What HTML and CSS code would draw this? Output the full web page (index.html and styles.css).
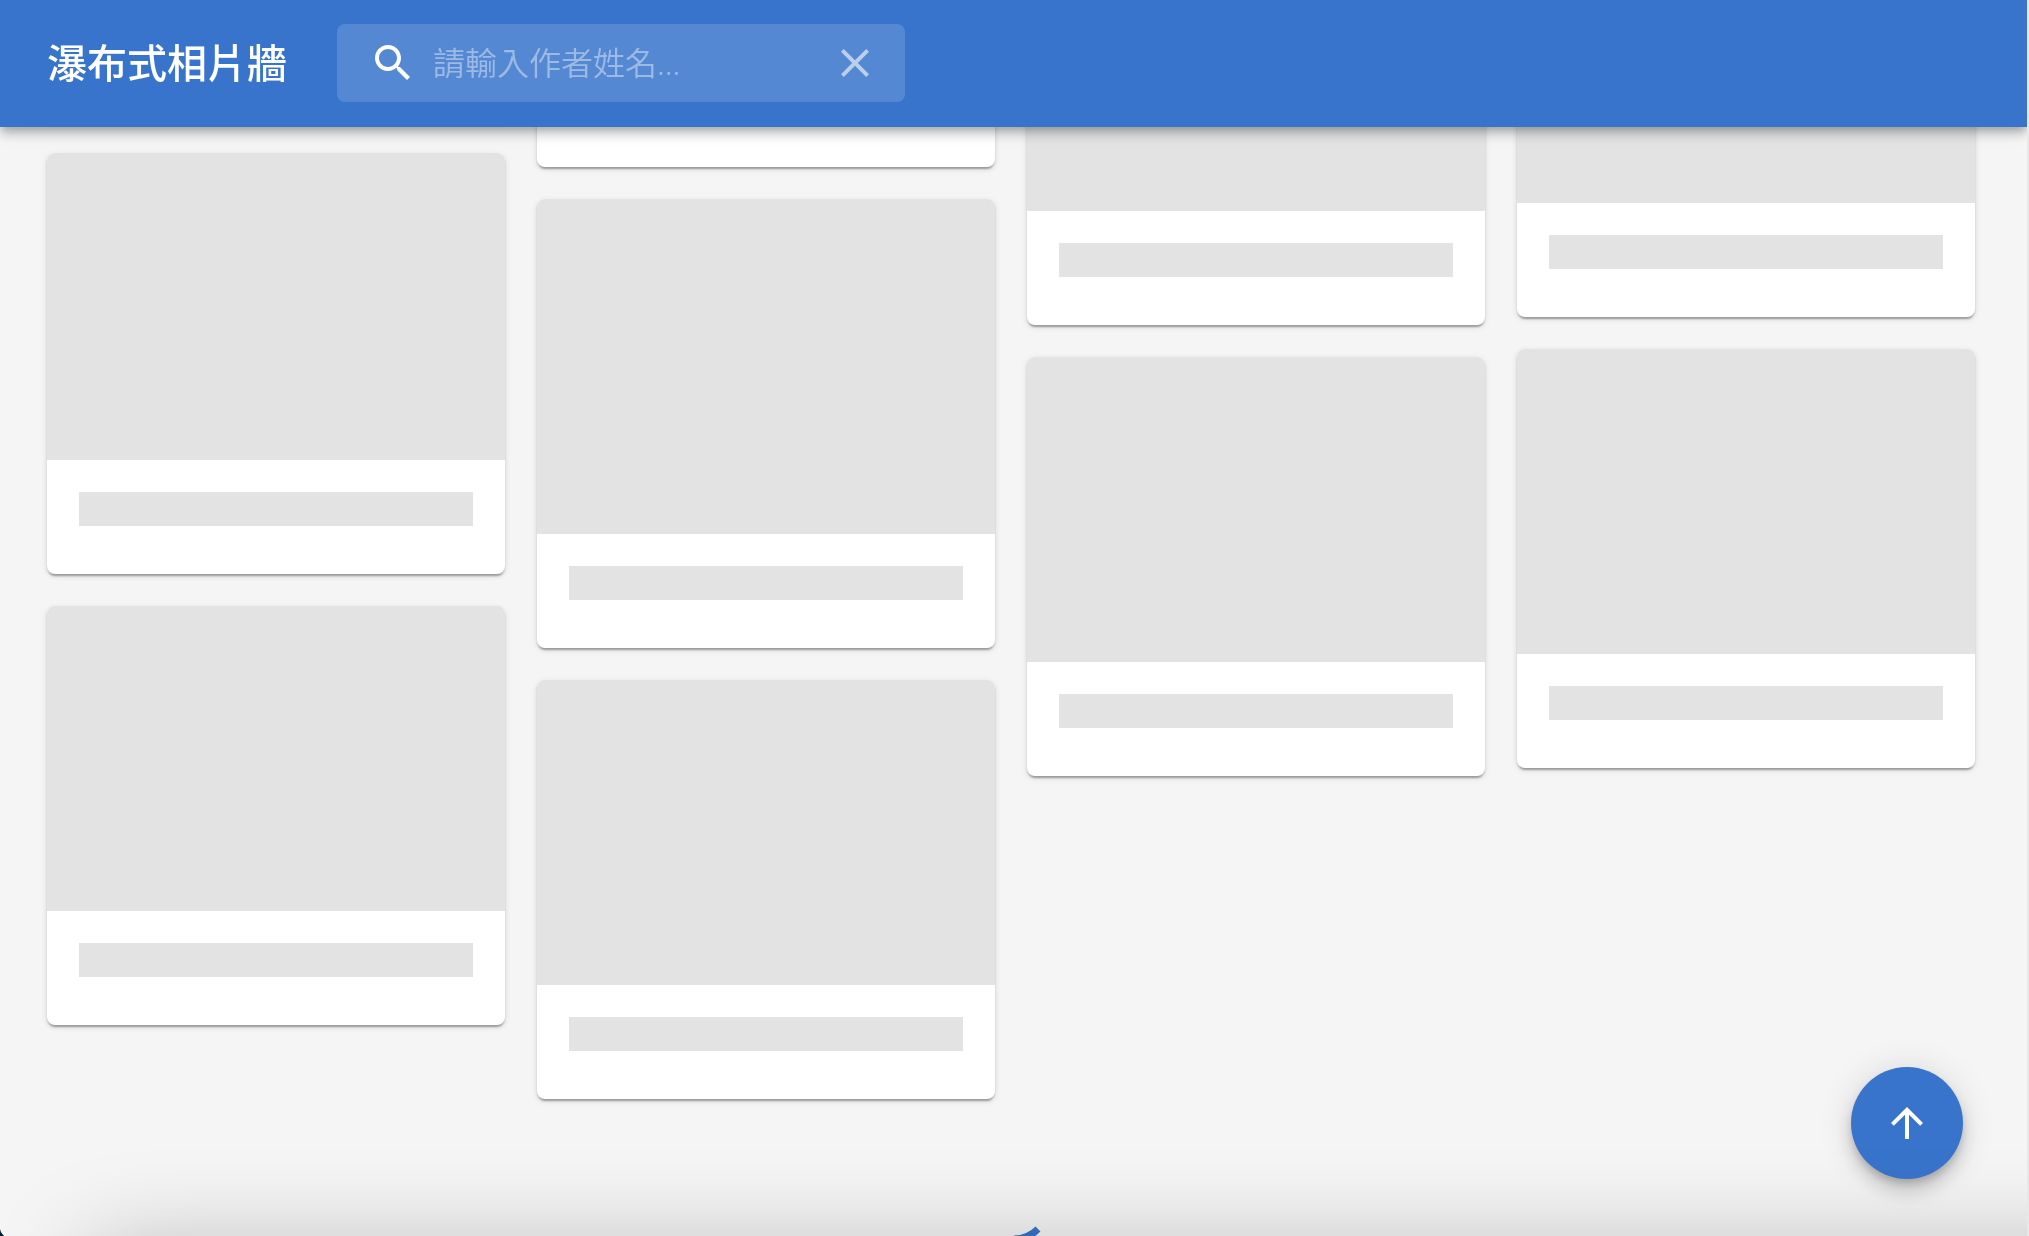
FILE: index.html
```
<!DOCTYPE html>
<html lang="zh-Hant">
<head>
<meta charset="utf-8">
<meta name="viewport" content="width=device-width, initial-scale=1">
<title>瀑布式相片牆</title>
<link rel="stylesheet" href="styles.css">
</head>
<body>
<header class="app-bar">
  <h1 class="title">瀑布式相片牆</h1>
  <form class="search" role="search">
    <svg class="icon" viewBox="0 0 24 24" aria-hidden="true"><path d="M15.5 14h-.79l-.28-.27C15.41 12.59 16 11.11 16 9.5 16 5.91 13.09 3 9.5 3S3 5.91 3 9.5 5.91 16 9.5 16c1.61 0 3.09-.59 4.23-1.57l.27.28v.79l5 4.99L20.49 19l-4.99-5zm-6 0C7.01 14 5 11.99 5 9.5S7.01 5 9.5 5 14 7.01 14 9.5 11.99 14 9.5 14z"/></svg>
    <input class="search-input" type="text" placeholder="請輸入作者姓名..." aria-label="作者姓名">
    <button class="clear" type="button" aria-label="清除"><svg class="icon" viewBox="0 0 24 24" aria-hidden="true"><path d="M19 6.41 17.59 5 12 10.59 6.41 5 5 6.41 10.59 12 5 17.59 6.41 19 12 13.41 17.59 19 19 17.59 13.41 12z"/></svg></button>
  </form>
</header>

<main class="wall">
  <div class="column">
    <article class="card"><div class="media" style="height:7px"></div><div class="content"><div class="line"></div></div></article>
    <article class="card"><div class="media" style="height:307px"></div><div class="content"><div class="line"></div></div></article>
    <article class="card"><div class="media" style="height:305px"></div><div class="content"><div class="line"></div></div></article>
  </div>
  <div class="column">
    <article class="card"><div class="media" style="height:53px"></div><div class="content"><div class="line"></div></div></article>
    <article class="card"><div class="media" style="height:335px"></div><div class="content"><div class="line"></div></div></article>
    <article class="card"><div class="media" style="height:305px"></div><div class="content"><div class="line"></div></div></article>
  </div>
  <div class="column">
    <article class="card"><div class="media" style="height:211px"></div><div class="content"><div class="line"></div></div></article>
    <article class="card"><div class="media" style="height:305px"></div><div class="content"><div class="line"></div></div></article>
  </div>
  <div class="column">
    <article class="card"><div class="media" style="height:203px"></div><div class="content"><div class="line"></div></div></article>
    <article class="card"><div class="media" style="height:305px"></div><div class="content"><div class="line"></div></div></article>
  </div>
</main>

<svg class="spinner" viewBox="0 0 72 72" role="img" aria-label="載入中"><path d="M60 60A34 34 0 0 1 36 70"/></svg>
<button class="fab" type="button" aria-label="回到頂端"><svg class="icon" viewBox="0 0 24 24" aria-hidden="true"><path d="m4 12 1.41 1.41L11 7.83V20h2V7.83l5.58 5.59L20 12l-8-8-8 8z"/></svg></button>
<div class="bottom-shade"></div>
<div class="corner"></div>
<div class="scroll-edge"></div>
</body>
</html>
```

FILE: styles.css
```
* {
  box-sizing: border-box;
}

html {
  height: 100%;
  overflow: hidden;
}

body {
  min-height: 100%;
  margin: 0;
  overflow: hidden;
  background: #f5f5f5;
  font-family: "Noto Sans", "Noto Sans CJK TC", sans-serif;
}

button {
  padding: 0;
  border: 0;
  color: inherit;
  background: none;
  cursor: pointer;
}

.icon {
  display: block;
  flex: none;
  width: 48px;
  height: 48px;
  fill: currentColor;
}

.app-bar {
  position: fixed;
  z-index: 2;
  top: 0;
  left: 0;
  right: 2px;
  display: flex;
  align-items: center;
  gap: 50px;
  height: 127px;
  padding: 0 47px 2px;
  color: #fff;
  background: #3874cb;
  box-shadow: 0 4px 8px -2px rgba(0, 0, 0, .2), 0 8px 10px rgba(0, 0, 0, .14), 0 2px 20px rgba(0, 0, 0, .12);
}

.title {
  margin: 0;
  font-size: 40px;
  font-weight: 500;
  line-height: 64px;
  white-space: nowrap;
}

.search {
  display: flex;
  align-items: center;
  width: 568px;
  height: 78px;
  padding: 0 26px 0 32px;
  border-radius: 8px;
  background: rgba(255, 255, 255, .15);
}

.search-input {
  flex: 1;
  min-width: 0;
  height: 48px;
  padding: 0 0 0 16px;
  border: 0;
  outline: 0;
  color: #fff;
  background: none;
  font: 350 32px/48px "Noto Sans", "Noto Sans CJK TC", sans-serif;
}

.search-input::placeholder {
  color: #fff;
  opacity: .42;
}

.clear {
  opacity: .6;
}

.wall {
  display: grid;
  grid-template-columns: repeat(4, 1fr);
  align-items: start;
  gap: 32px;
  padding: 0 54px 0 47px;
}

.column {
  display: flex;
  flex-direction: column;
  gap: 32px;
}

.card {
  overflow: hidden;
  border-radius: 8px;
  background: #fff;
  box-shadow: 0 4px 2px -2px rgba(0, 0, 0, .2), 0 2px 2px rgba(0, 0, 0, .14), 0 2px 6px rgba(0, 0, 0, .12);
}

.media,
.line {
  background: #e3e3e3;
}

.content {
  padding: 32px 32px 48px;
}

.line {
  height: 34px;
}

.spinner {
  position: fixed;
  left: calc(50% - 37px);
  bottom: -5px;
  width: 72px;
  height: 72px;
  fill: none;
  stroke: #3874cb;
  stroke-width: 7;
}

.fab {
  position: fixed;
  right: 66px;
  bottom: 57px;
  display: grid;
  place-items: center;
  width: 112px;
  height: 112px;
  border-radius: 50%;
  color: #fff;
  background: #3874cb;
  box-shadow: 0 6px 10px -2px rgba(0, 0, 0, .2), 0 12px 20px rgba(0, 0, 0, .14), 0 2px 36px rgba(0, 0, 0, .12);
}

.bottom-shade {
  position: fixed;
  z-index: 3;
  top: calc(100% + 18px);
  left: 90px;
  right: -120px;
  height: 200px;
  box-shadow: 0 0 100px rgba(0, 0, 0, .28);
  pointer-events: none;
}

.corner {
  position: fixed;
  z-index: 4;
  left: 0;
  bottom: 0;
  width: 4px;
  height: 7px;
  background: #00202e;
  clip-path: polygon(0 0, 25% 45%, 100% 100%, 0 100%);
}

.scroll-edge {
  position: fixed;
  z-index: 3;
  top: 0;
  right: 0;
  bottom: 0;
  width: 2px;
  background: #e8e8e8;
}
```
